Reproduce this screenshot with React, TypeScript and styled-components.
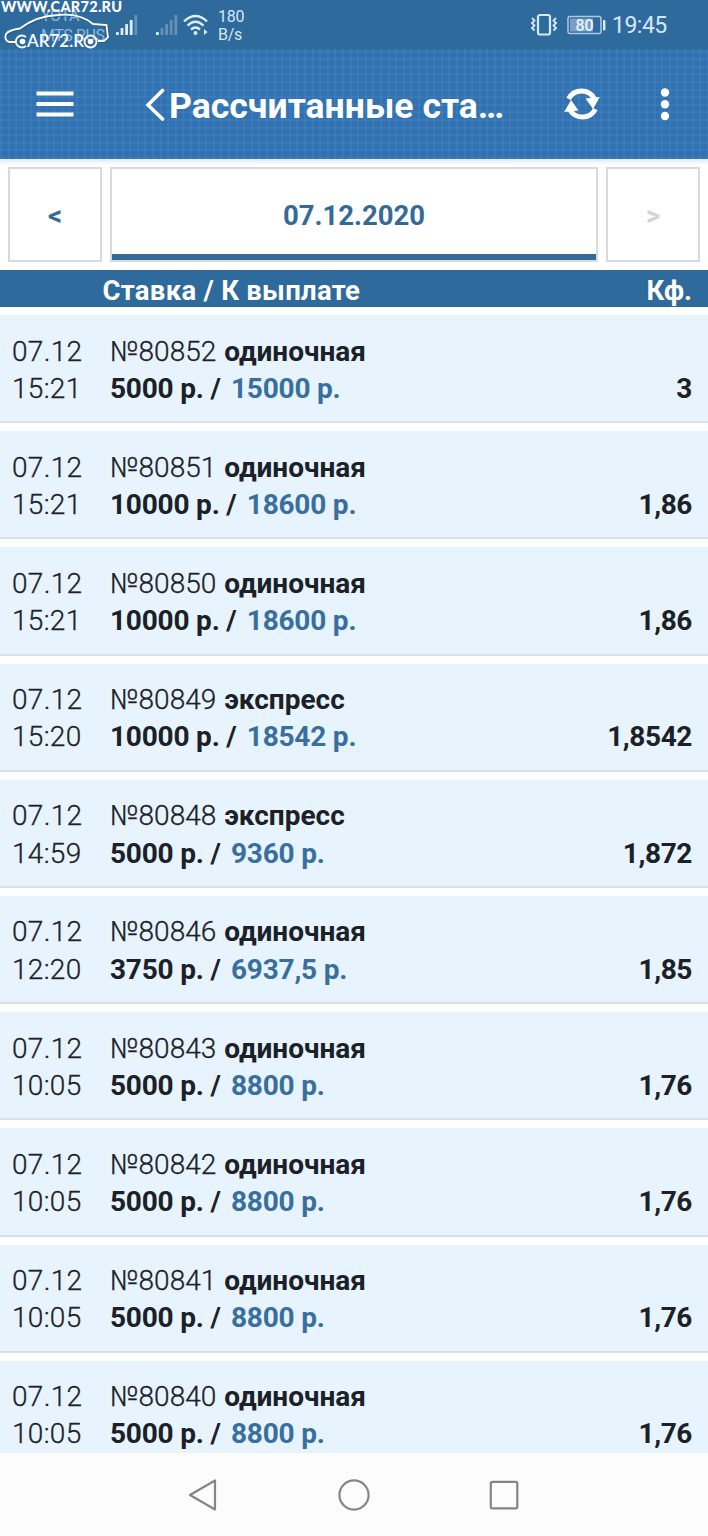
import React from 'react';
import styled, { createGlobalStyle } from 'styled-components';

const GlobalStyle = createGlobalStyle`
  * { box-sizing: border-box; }
  html, body { margin: 0; padding: 0; }
  body { font-family: Roboto, "Liberation Sans", sans-serif; background: #fff; color: #1b2127; }
`;

const Screen = styled.div`
  width: 708px;
  height: 1536px;
  display: flex;
  flex-direction: column;
  overflow: hidden;
  background: #fdfefe;
`;

const StatusBar = styled.div`
  position: relative;
  flex: none;
  height: 49px;
  background: #2e6a9c;
  color: #d5e8f8;
  display: flex;
  align-items: center;
  padding: 0 41px;
`;

const Carriers = styled.div`
  width: 75px;
  padding-top: 2px;
  font-size: 16px;
  line-height: 20px;
  letter-spacing: -0.4px;
  color: #8db9e0;
  white-space: nowrap;
`;

const Signal = styled.svg`
  display: block;
  width: 22px;
  height: 22px;
  margin-right: 18px;
`;

const Wifi = styled.svg`
  display: block;
  width: 26px;
  height: 22px;
  margin-left: -13px;
`;

const Speed = styled.div`
  margin-left: 9px;
  padding-top: 2px;
  font-size: 16px;
  line-height: 18px;
  letter-spacing: -0.3px;
  flex: 1;
`;

const StatusIcon = styled.svg<{ $gap: number }>`
  display: block;
  height: 24px;
  margin-right: ${(p) => p.$gap}px;
`;

const Clock = styled.div`
  padding-top: 2px;
  font-size: 23px;
  line-height: 26px;
  width: 55px;
  letter-spacing: -0.5px;
`;

const Watermark = styled.svg`
  position: absolute;
  left: 0;
  top: 0;
`;

const AppBar = styled.header`
  flex: none;
  height: 110px;
  display: flex;
  align-items: center;
  padding-left: 36px;
  color: #fff;
  background-color: #3171b0;
  background-image:
    repeating-linear-gradient(90deg, rgba(90, 155, 215, 0.17) 0 2px, transparent 2px 7.6px),
    repeating-linear-gradient(0deg, rgba(90, 155, 215, 0.17) 0 2px, transparent 2px 7.6px);
`;

const Icon = styled.svg<{ $gap?: number }>`
  display: block;
  flex: none;
  margin-left: ${(p) => p.$gap ?? 0}px;
`;

const Title = styled.h1`
  margin: 0 0 0 4px;
  padding-top: 4px;
  width: 342px;
  font-size: 35.6px;
  line-height: 42px;
  font-weight: 700;
  white-space: nowrap;
`;

const DatePicker = styled.div`
  flex: none;
  display: flex;
  gap: 8px;
  height: 111px;
  padding: 8px;
  background: linear-gradient(#dfeaf4 0, #fff 6px);
`;

const DateCell = styled.button<{ $wide?: boolean; $muted?: boolean }>`
  flex: ${(p) => (p.$wide ? '1' : '0 0 94px')};
  height: 95px;
  padding: 3px 0 0;
  border: 2px solid #d8dade;
  background: #fff;
  box-shadow: ${(p) => (p.$wide ? 'inset 0 -6px #336a98' : 'none')};
  font: 700 27.5px/32px Roboto, "Liberation Sans", sans-serif;
  color: ${(p) => (p.$muted ? '#d2d5d8' : '#336a98')};
`;

const TableHead = styled.div`
  flex: none;
  height: 37px;
  margin-bottom: 8px;
  display: flex;
  justify-content: space-between;
  padding: 0 16px 0 102.5px;
  background: #2e6a9c;
  color: #fff;
  font-size: 27.5px;
  line-height: 41px;
  font-weight: 700;
`;

const HeadLabel = styled.span`
  letter-spacing: 0.28px;
`;

const List = styled.main`
  flex: 1;
  min-height: 0;
  overflow: hidden;
`;

const Row = styled.article`
  display: grid;
  grid-template-columns: 98px 1fr auto;
  height: 108.2px;
  margin-bottom: 8px;
  padding: 17.5px 16px 0 12px;
  background: #e7f4fe;
  border-bottom: 2px solid #d9e0e7;
  font-size: 28px;
  line-height: 37.3px;
  white-space: nowrap;
`;

const When = styled.div`
  font-weight: 300;
  letter-spacing: 0.3px;
  -webkit-text-stroke: 0.3px currentColor;
`;

const Bet = styled.div``;

const Num = styled.span`
  font-weight: 300;
  -webkit-text-stroke: 0.3px currentColor;
`;

const Kind = styled.span`
  font-weight: 700;
  margin-left: 1px;
`;

const Stake = styled.span`
  font-weight: 700;
  letter-spacing: -0.2px;
`;

const Payout = styled(Stake)`
  margin-left: 3.5px;
  color: #386f9f;
`;

const Odds = styled.span`
  align-self: start;
  padding-top: 37.3px;
  font-weight: 700;
  letter-spacing: -0.4px;
`;

const NavBar = styled.nav`
  flex: none;
  height: 83px;
  display: flex;
  align-items: center;
  padding-left: 187px;
  background: #fcfcfc;
`;

type BetRow = [time: string, id: number, kind: string, stake: string, payout: string, odds: string];

const bets: BetRow[] = [
  ['15:21', 80852, 'одиночная', '5000', '15000', '3'],
  ['15:21', 80851, 'одиночная', '10000', '18600', '1,86'],
  ['15:21', 80850, 'одиночная', '10000', '18600', '1,86'],
  ['15:20', 80849, 'экспресс', '10000', '18542', '1,8542'],
  ['14:59', 80848, 'экспресс', '5000', '9360', '1,872'],
  ['12:20', 80846, 'одиночная', '3750', '6937,5', '1,85'],
  ['10:05', 80843, 'одиночная', '5000', '8800', '1,76'],
  ['10:05', 80842, 'одиночная', '5000', '8800', '1,76'],
  ['10:05', 80841, 'одиночная', '5000', '8800', '1,76'],
  ['10:05', 80840, 'одиночная', '5000', '8800', '1,76'],
];

const carOutline =
  'M15 42 H9 Q4 40 6 34 Q9 30 20 28.5 Q36 16 58 15 Q80 13 93 24 L106.5 25 L108 37.5 L104 41 H98';

function SignalBars({ strength }: { strength: number }) {
  return (
    <Signal viewBox="0 0 22 22">
      {[3, 7, 11, 15, 20].map((h, i) => (
        <rect key={h} x={i * 4.6} y={21 - h} width="2.8" height={h} rx="0.6" fill="#dcedfb" opacity={i < strength ? 1 : 0.3} />
      ))}
    </Signal>
  );
}

export default function App() {
  return (
    <Screen>
      <GlobalStyle />
      <StatusBar>
        <Carriers>YOTA<br />MTS RUS</Carriers>
        <SignalBars strength={4} />
        <SignalBars strength={1} />
        <Wifi viewBox="0 0 26 22" fill="none" stroke="#dcedfb" strokeWidth="2.4">
          <path d="M1 7.500 Q12.500 -3.500 24 7.500 M4.500 11.700 Q12.500 4 20.500 11.700 M8 15.500 Q12.500 11.500 17 15.500" />
          <circle cx="12.500" cy="19" r="2" fill="#dcedfb" stroke="none" />
          <path d="M21 15 L24.500 18 L21 21Z" fill="#dcedfb" stroke="none" />
        </Wifi>
        <Speed>180<br />B/s</Speed>
        <StatusIcon $gap={9} width="28" viewBox="0 0 28 24" fill="none" stroke="#d5ebfb" strokeWidth="2.2">
          <rect x="8" y="2" width="12" height="19.500" rx="2" />
          <path d="M2 5l2.500 2.500L2 10l2.500 2.500L2 15l2.500 2.500M26 5l-2.500 2.500L26 10l-2.500 2.500L26 15l-2.500 2.500" strokeWidth="1.800" />
        </StatusIcon>
        <StatusIcon $gap={5} width="40" viewBox="0 0 40 24">
          <rect x="1" y="3.500" width="33" height="17" rx="2" fill="none" stroke="#a9cbe8" strokeWidth="1.500" />
          <rect x="3" y="5.500" width="23" height="13" fill="#7d9fbf" />
          <rect x="36" y="7" width="2.400" height="10.500" rx="1" fill="#dcedfb" />
          <text x="17.500" y="17.500" textAnchor="middle" fontSize="16" fontWeight="500" fill="#e8f5ff">80</text>
        </StatusIcon>
        <Clock>19:45</Clock>
        <Watermark width="130" height="52" viewBox="0 0 130 52">
          <path d={carOutline} fill="none" stroke="#1f4a70" strokeOpacity="0.5" strokeWidth="1.800" transform="translate(1 1)" />
          <g fill="none" stroke="#fff" strokeWidth="1.800">
            <path d={carOutline} />
            <path d="M26 37.200 A6 6 0 1 0 26 45.800" />
            <circle cx="90.500" cy="41.500" r="6" />
          </g>
          <circle cx="22.500" cy="41.500" r="2.800" fill="#fff" />
          <circle cx="90.500" cy="41.500" r="2.800" fill="#fff" />
          <g fill="#fff">
            <text x="1" y="12" fontSize="14.500" fontWeight="900" textLength="121" fontFamily="Lato">WWW.CAR72.RU</text>
            <text x="27" y="47.300" fontSize="16.500" fontWeight="600" textLength="57" lengthAdjust="spacingAndGlyphs" fontFamily="Lato">AR72.R</text>
          </g>
        </Watermark>
      </StatusBar>
      <AppBar>
        <Icon width="38" height="28" viewBox="0 0 38 28" fill="#fff">
          <path d="M.5 1.500h37v4H.5zM.5 12h37v4H.5zM.5 22.500h37v4H.5z" />
        </Icon>
        <Icon $gap={71} width="20" height="34" viewBox="0 0 20 34" fill="none" stroke="#fff" strokeWidth="3.6" strokeLinecap="round">
          <path d="M17.500 3.500 L3 18 L17.500 32" />
        </Icon>
        <Title>Рассчитанные ста…</Title>
        <Icon $gap={53} width="36" height="36" viewBox="0 0 36 36">
          <path d="M4.600 12.800 A14.500 14.500 0 0 1 30.500 13 M31.400 23.200 A14.500 14.500 0 0 1 5.500 23" fill="none" stroke="#fff" strokeWidth="5" />
          <path d="M21.500 12 L35.800 10.500 L29 22.500Z M14.500 24 L.2 25.500 L7 13.500Z" fill="#fff" transform="translate(0 .5)" />
        </Icon>
        <Icon $gap={60} width="10" height="34" viewBox="0 0 10 34" fill="#fff">
          <circle cx="5" cy="5.500" r="4.200" /><circle cx="5" cy="17.300" r="4.200" /><circle cx="5" cy="29" r="4.200" />
        </Icon>
      </AppBar>
      <DatePicker>
        <DateCell>&lt;</DateCell>
        <DateCell $wide>07.12.2020</DateCell>
        <DateCell $muted>&gt;</DateCell>
      </DatePicker>
      <TableHead><HeadLabel>Ставка / К выплате</HeadLabel><span>Кф.</span></TableHead>
      <List>
        {bets.map(([time, id, kind, stake, payout, odds]) => (
          <Row key={id}>
            <When>07.12<br />{time}</When>
            <Bet>
              <Num>№{id}</Num> <Kind>{kind}</Kind><br />
              <Stake>{stake} р. / </Stake><Payout>{payout} р.</Payout>
            </Bet>
            <Odds>{odds}</Odds>
          </Row>
        ))}
      </List>
      <NavBar>
        <Icon width="30" height="34" viewBox="0 0 30 34" fill="none" stroke="#858585" strokeWidth="2.2" strokeLinejoin="round">
          <path d="M28 2.500 V31.500 L3 17Z" />
        </Icon>
        <Icon $gap={120} width="34" height="34" viewBox="0 0 34 34" fill="none" stroke="#858585" strokeWidth="2.2">
          <circle cx="17" cy="17" r="14.600" />
        </Icon>
        <Icon $gap={118} width="30" height="30" viewBox="0 0 30 30" fill="none" stroke="#858585" strokeWidth="2.2">
          <rect x="1.800" y="1.800" width="26.500" height="26.500" rx="1.500" />
        </Icon>
      </NavBar>
    </Screen>
  );
}
